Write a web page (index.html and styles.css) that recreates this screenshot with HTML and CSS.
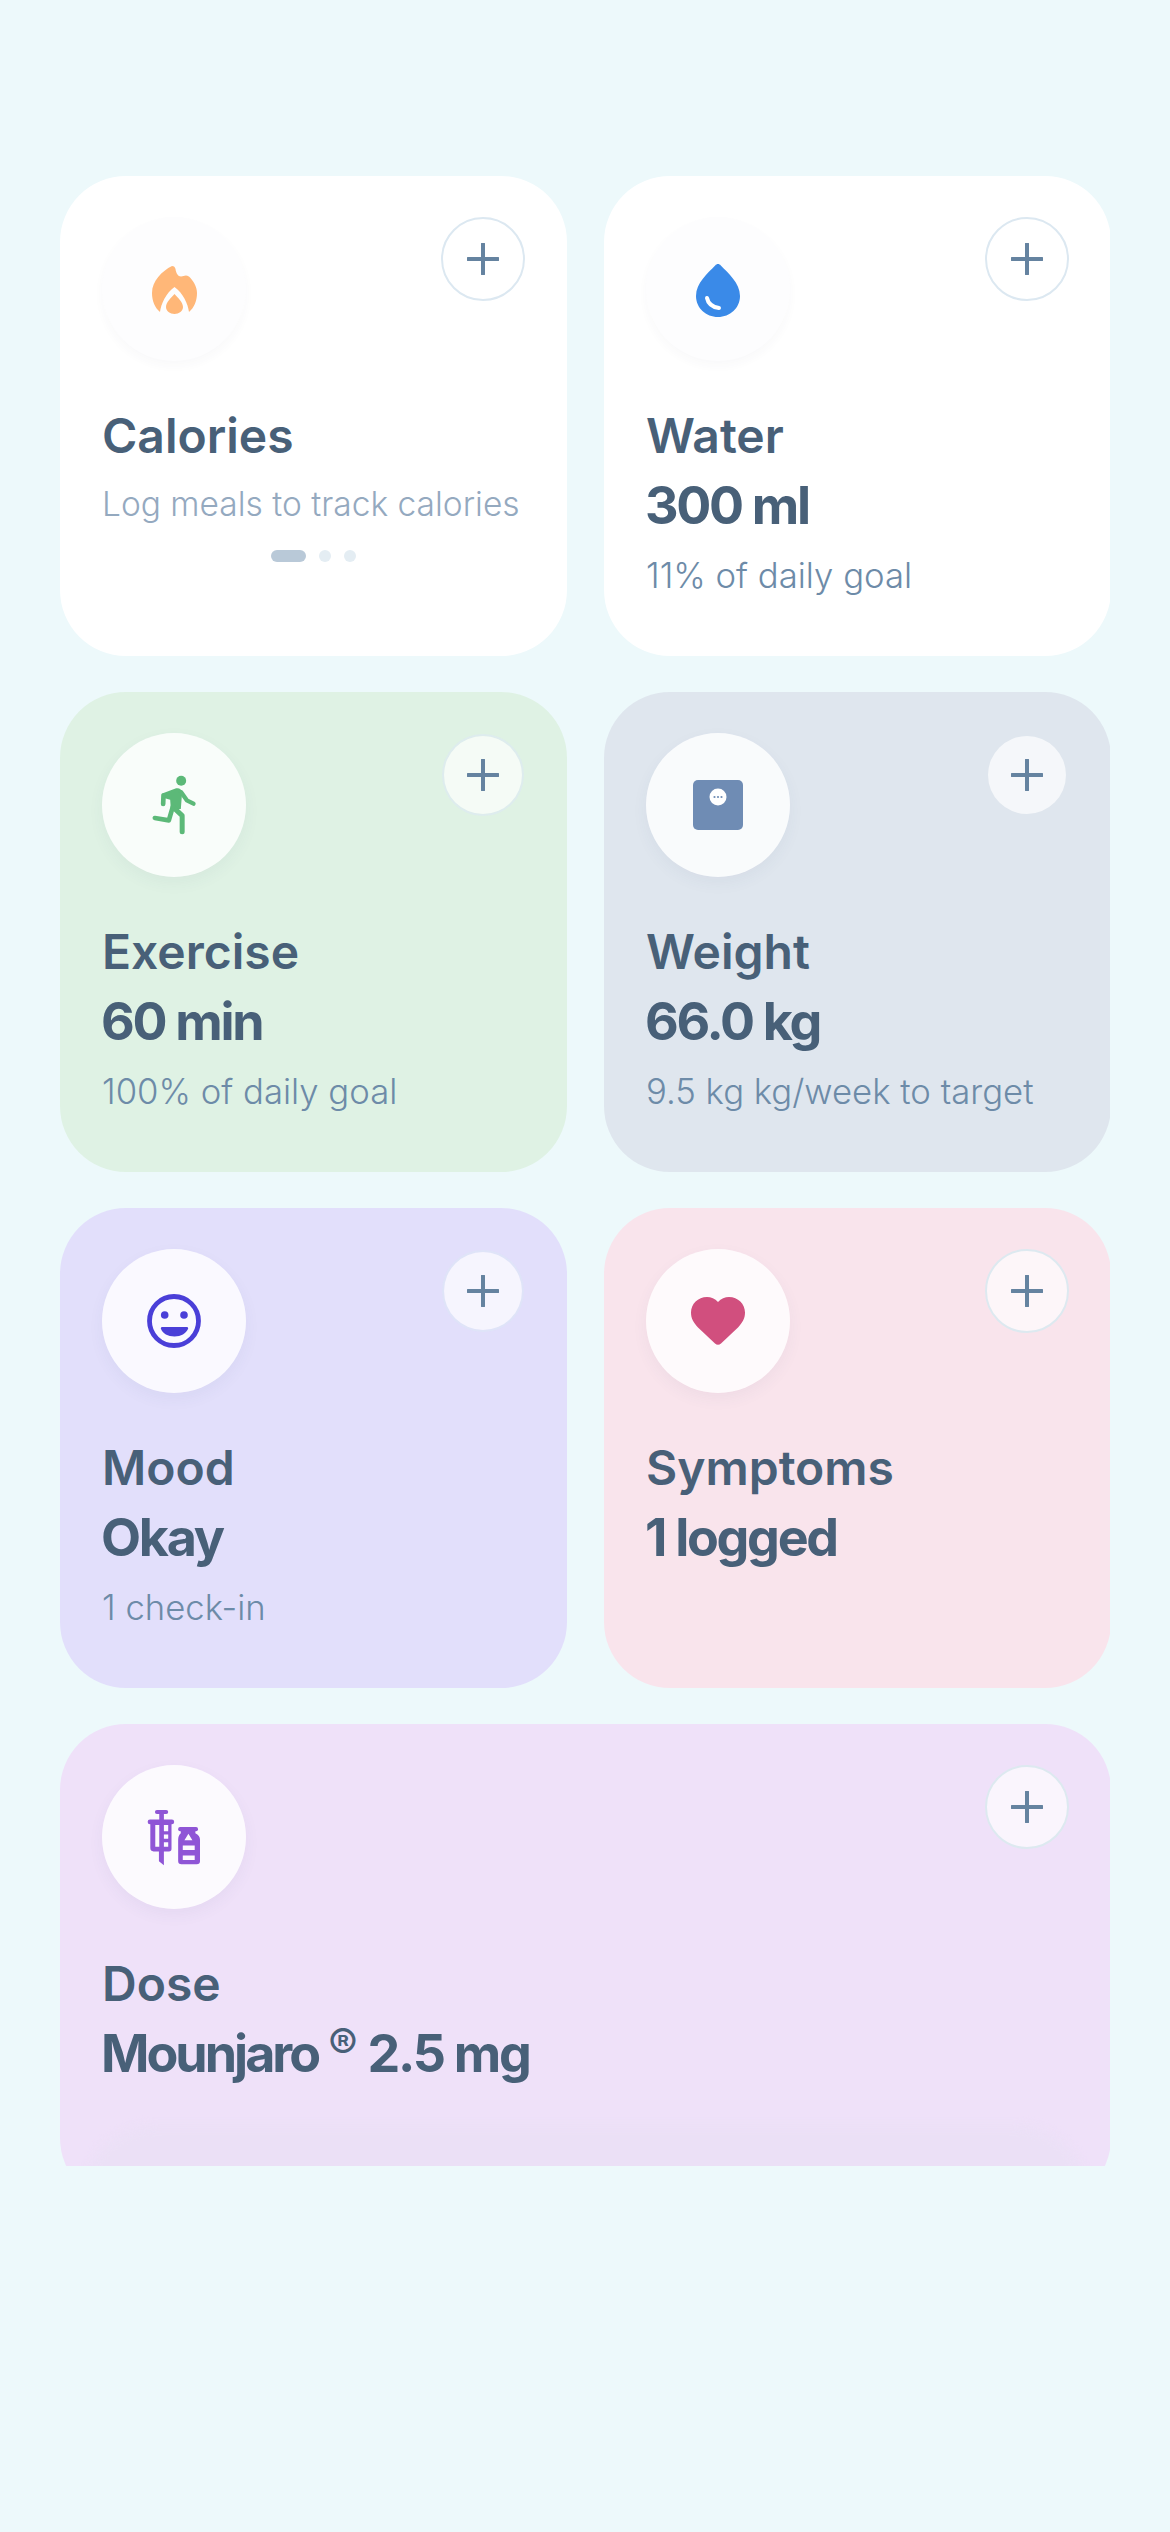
FILE: index.html
```html
<!DOCTYPE html>
<html lang="en">
<head>
<meta charset="utf-8">
<title>Today</title>
<link rel="stylesheet" href="styles.css">
</head>
<body>
<main class="viewport">
  <div class="grid">
    <section class="card card-white">
      <div class="card-top">
        <div class="icon-circle"><svg class="icon icon-flame" viewBox="0 0 45 48"><path fill="#ffb778" d="M20 0C22 0 23 1 23.500 3 24 7 26 10.500 29 10.500 31 10.500 32 9.500 34 9.500 36 9.500 37 10.500 38 11.500 42 16 45 21 45 27 45 35 42 42 37 46 36 38 31 27 22.500 21 14 27 9 38 8 46 3 42 0 35 0 27 0 15 10 5 20 0z"/><path fill="#ffb778" d="M22.500 28C26 32 31 36 31 41 31 45 27 48 22.500 48 18 48 14 45 14 41 14 36 19 32 22.500 28z"/></svg></div>
        <div class="plus-slot"><button class="plus plus-outline" type="button"><svg viewBox="0 0 32 32"><path d="M16 1v30M1 16h30"/></svg></button></div>
      </div>
      <h2 class="title">Calories</h2>
      <p class="hint">Log meals to track calories</p>
      <div class="dots"><span class="dot-active"></span><span class="dot"></span><span class="dot"></span></div>
    </section>

    <section class="card card-white">
      <div class="card-top">
        <div class="icon-circle"><svg class="icon icon-drop" viewBox="0 0 44 53"><path fill="#3a8ae8" d="M22 0C23 0 24 .5 24.800 1.500 32 9 44 19 44 32 44 44 34 53 22 53 10 53 0 44 0 32 0 19 12 9 19.200 1.500 20 .5 21 0 22 0z"/><path fill="none" stroke="#fff" stroke-width="4" stroke-linecap="round" d="M11 34C12 39 16 43 23 44"/></svg></div>
        <div class="plus-slot"><button class="plus plus-outline" type="button"><svg viewBox="0 0 32 32"><path d="M16 1v30M1 16h30"/></svg></button></div>
      </div>
      <h2 class="title">Water</h2>
      <p class="value">300 ml</p>
      <p class="sub">11% of daily goal</p>
    </section>

    <section class="card card-green">
      <div class="card-top">
        <div class="icon-circle"><svg class="icon icon-run" viewBox="178 170 134 180"><circle cx="265" cy="187" r="15" fill="#5cb978"/><path fill="#5cb978" d="M206 230Q205 226 212 224L250 210Q263 207 268 220L264 272H234L232 244 216 240z"/><g fill="none" stroke="#5cb978" stroke-linecap="round" stroke-linejoin="round"><path stroke-width="14" d="M212 232L211 257"/><path stroke-width="13" d="M265 222L282 246 302 256"/><path stroke-width="15" d="M245 270L268 292V340"/><path stroke-width="14" d="M240 265L228 306 186 299"/></g></svg></div>
        <div class="plus-slot"><button class="plus plus-faint" type="button"><svg viewBox="0 0 32 32"><path d="M16 1v30M1 16h30"/></svg></button></div>
      </div>
      <h2 class="title">Exercise</h2>
      <p class="value">60 min</p>
      <p class="sub">100% of daily goal</p>
    </section>

    <section class="card card-slate">
      <div class="card-top">
        <div class="icon-circle"><svg class="icon icon-scale" viewBox="0 0 50 50"><rect width="50" height="50" rx="5" fill="#6f8cb4"/><circle cx="25" cy="17" r="8.500" fill="#fff"/><circle cx="21.500" cy="17" r="1.100" fill="#6f8cb4"/><circle cx="25" cy="17" r="1.100" fill="#6f8cb4"/><circle cx="28.500" cy="17" r="1.100" fill="#6f8cb4"/></svg></div>
        <div class="plus-slot"><button class="plus" type="button"><svg viewBox="0 0 32 32"><path d="M16 1v30M1 16h30"/></svg></button></div>
      </div>
      <h2 class="title">Weight</h2>
      <p class="value">66.0 kg</p>
      <p class="sub">9.5 kg kg/week to target</p>
    </section>

    <section class="card card-violet">
      <div class="card-top">
        <div class="icon-circle"><svg class="icon icon-smile" viewBox="0 0 54 54"><circle cx="27" cy="27" r="24.500" fill="none" stroke="#4a3fd8" stroke-width="4.800"/><circle cx="17.700" cy="21" r="3.800" fill="#4a3fd8"/><circle cx="37" cy="21" r="3.800" fill="#4a3fd8"/><path fill="#4a3fd8" d="M15 33h25c1 0 1.500 1 1 2-2 4.500-7 7.500-13.500 7.500S15.500 39.500 14 35c-.5-1 0-2 1-2z"/></svg></div>
        <div class="plus-slot"><button class="plus plus-faint" type="button"><svg viewBox="0 0 32 32"><path d="M16 1v30M1 16h30"/></svg></button></div>
      </div>
      <h2 class="title">Mood</h2>
      <p class="value">Okay</p>
      <p class="sub">1 check-in</p>
    </section>

    <section class="card card-pink">
      <div class="card-top">
        <div class="icon-circle"><svg class="icon icon-heart" viewBox="0 0 54 48"><path fill="#d14f7e" d="M27 5C30 1.500 34 0 38 0c9 0 16 7 16 15.500 0 5.500-2 9.500-7 15L30 46.500c-1.800 1.800-4.200 1.800-6 0L7 30.500c-5-5.500-7-9.500-7-15C0 7 7 0 16 0c4 0 8 1.500 11 5z"/></svg></div>
        <div class="plus-slot"><button class="plus plus-ring" type="button"><svg viewBox="0 0 32 32"><path d="M16 1v30M1 16h30"/></svg></button></div>
      </div>
      <h2 class="title">Symptoms</h2>
      <p class="value">1 logged</p>
    </section>

    <section class="card card-purple card-wide">
      <div class="card-top">
        <div class="icon-circle"><svg class="icon icon-dose" viewBox="168 178 166 172"><g fill="#8f55d6"><rect x="192" y="181" width="40" height="12" rx="6"/><rect x="205" y="190" width="14" height="25"/><rect x="170" y="210" width="80" height="14" rx="7"/><path fill-rule="evenodd" d="M178 220h64v78q0 8-8 8h-15v42l-15-12v-30h-16q-10 0-10-10zM193 226v66h12v-66zM219 226v19h13v-19zM219 255v13h13v-13zM219 278v14h13v-14z"/><rect x="262" y="232" width="60" height="13" rx="6"/><path fill-rule="evenodd" d="M270 243h44v8q14 6 14 20v64q0 10-10 10h-46q-10 0-10-10v-64q0-14 8-20zM293 253L305 272H281zM276 288v14h36v-14zM276 318v14h36v-14z"/></g></svg></div>
        <div class="plus-slot"><button class="plus plus-ring" type="button"><svg viewBox="0 0 32 32"><path d="M16 1v30M1 16h30"/></svg></button></div>
      </div>
      <h2 class="title">Dose</h2>
      <p class="value"><span class="brand">Mounjaro</span><sup class="reg">®</sup> 2.5 mg</p>
      <div class="fade"></div>
    </section>
  </div>
</main>
</body>
</html>
```
FILE: styles.css
```css
* { box-sizing: border-box; }
html, body { margin: 0; height: 100%; }
body {
  background: #edf9fb;
  font-family: Inter, "Noto Sans", sans-serif;
  color: #486078;
}
.viewport {
  margin: 176px 60px 0;
  height: 1990px;
  overflow: hidden;
}
.grid {
  display: grid;
  grid-template-columns: 507px 507px;
  grid-auto-rows: 480px;
  column-gap: 37px;
  row-gap: 36px;
}
.card {
  position: relative;
  overflow: hidden;
  border-radius: 66px;
  padding: 41px 42px 0;
}
.card-wide { grid-column: 1 / 3; }
.card-white { background: #fff; }
.card-green { background: #dff2e4; }
.card-slate { background: #dfe6ee; }
.card-violet { background: #e2dffb; }
.card-pink { background: #f9e4ec; }
.card-purple { background: #efe1f9; }
.card-top {
  display: flex;
  justify-content: space-between;
  align-items: flex-start;
  height: 144px;
}
.icon-circle {
  width: 144px;
  height: 144px;
  border-radius: 50%;
  background: rgba(255, 255, 255, .82);
  box-shadow: 0 6px 16px rgba(60, 70, 110, .05);
  display: flex;
  align-items: center;
  justify-content: center;
}
.card-white .icon-circle { background: #fdfdfe; box-shadow: 0 5px 10px rgba(60, 70, 110, .03); }
.icon-flame { width: 45px; height: 48px; margin-top: 2px; }
.icon-drop { width: 44px; height: 53px; margin-top: 2px; }
.icon-run { width: 45px; height: 60px; }
.icon-scale { width: 50px; height: 50px; }
.icon-smile { width: 54px; height: 54px; }
.icon-heart { width: 54px; height: 48px; }
.icon-dose { width: 55px; height: 57px; }
.plus-slot {
  width: 84px;
  height: 84px;
  display: flex;
  align-items: center;
  justify-content: center;
}
.plus {
  width: 78px;
  height: 78px;
  flex: none;
  border: 0;
  padding: 0;
  border-radius: 50%;
  background: rgba(255, 255, 255, .68);
  display: flex;
  align-items: center;
  justify-content: center;
}
.plus-faint { box-shadow: 0 0 0 2px rgba(220, 232, 245, .55); }
.plus-outline {
  width: 84px;
  height: 84px;
  background: #fff;
  border: 2.500px solid #dce8f1;
}
.plus-ring { width: 84px; height: 84px; border: 2.500px solid #dde9f0; }
.plus svg { width: 32px; height: 32px; }
.plus path {
  fill: none;
  stroke: #6583a0;
  stroke-width: 4;
  stroke-linecap: round;
}
.title {
  margin: 47px 0 0;
  font-size: 48px;
  line-height: 56px;
  font-weight: 600;
}
.value {
  margin: 12px 0 0 -1px;
  font-size: 52px;
  line-height: 60px;
  font-weight: 700;
  letter-spacing: -2.300px;
}
.brand { letter-spacing: -3px; }
.sub {
  margin: 18px 0 0;
  font-size: 34.700px;
  line-height: 42px;
  font-weight: 300;
  color: #6d8ba8;
}
.hint {
  margin: 19px 0 0;
  font-size: 33.500px;
  line-height: 42px;
  font-weight: 300;
  color: #94a9bf;
  white-space: nowrap;
}
.dots {
  display: flex;
  justify-content: center;
  align-items: center;
  gap: 13px;
  margin-top: 25px;
}
.dot-active { width: 35px; height: 12px; border-radius: 6px; background: #b9c9d8; }
.dot { width: 12px; height: 12px; border-radius: 50%; background: #e4edf3; }
.reg {
  font-size: 44px;
  font-weight: 500;
  vertical-align: 12px;
  line-height: 0;
  margin: 0 0 0 10px;
  letter-spacing: 0;
}
.fade {
  position: absolute;
  left: 24px;
  right: 24px;
  bottom: 0;
  height: 78px;
  border-radius: 70px 70px 0 0;
  background: #ebe0f6;
  filter: blur(5px);
}
```
